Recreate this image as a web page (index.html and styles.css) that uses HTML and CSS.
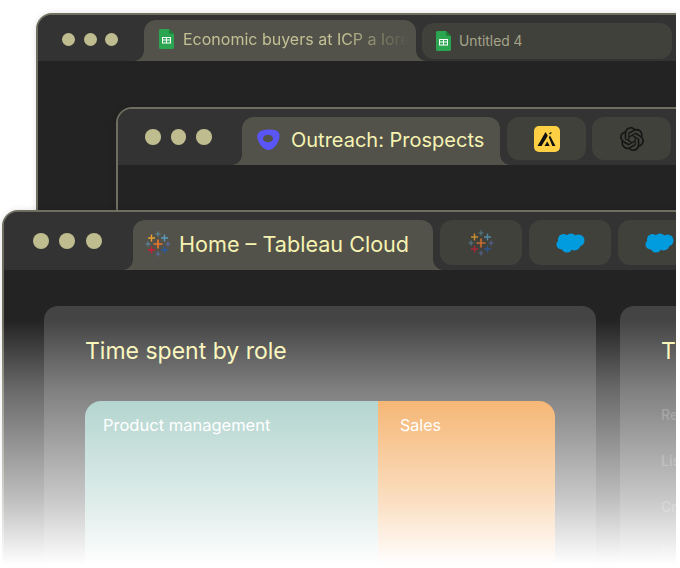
FILE: index.html
```html
<!DOCTYPE html>
<html lang="en">
<head>
    <meta charset="UTF-8">
    <meta name="viewport" content="width=device-width, initial-scale=1.0">
    <title>Browser windows</title>
    <link rel="stylesheet" href="styles.css">
</head>
<body>

<svg class="icon-defs">
    <symbol id="sheets" viewBox="0 0 15 20">
        <path d="M1.5 0H10l5 5v13.5a1.5 1.5 0 0 1-1.5 1.5h-12A1.5 1.5 0 0 1 0 18.5v-17A1.5 1.5 0 0 1 1.5 0z" fill="#2ca550"/>
        <path d="M10 0l5 5h-3.6A1.4 1.4 0 0 1 10 3.6z" fill="#1c8038"/>
        <path d="M3 8h9v6.500H3zM4 9v1.600h3V9zm4 0v1.600h3V9zM4 11.600V13.500h3v-1.900zm4 0V13.500h3v-1.900z" fill="#fff" fill-rule="evenodd"/>
    </symbol>
    <symbol id="tableau" viewBox="0 0 26 26">
        <path d="M13 8.500v9M8.500 13h9" stroke="#e8762b" stroke-width="1.700"/>
        <path d="M6.500 3.500v7M3 7h7" stroke="#e9a02f" stroke-width="1.400"/>
        <path d="M19.500 3.500v7M16 7h7" stroke="#5b9bbd" stroke-width="1.400"/>
        <path d="M6.500 15.500v7M3 19h7" stroke="#c72037" stroke-width="1.400"/>
        <path d="M19.500 15.500v7M16 19h7" stroke="#2b5a9e" stroke-width="1.400"/>
        <path d="M13 0.500v5M10.500 3h5" stroke="#5b879b" stroke-width="1.200"/>
        <path d="M3 10.500v5M0.500 13h5" stroke="#5b879b" stroke-width="1.200"/>
        <path d="M23 10.500v5M20.500 13h5" stroke="#5a6a9e" stroke-width="1.200"/>
        <path d="M13 20.500v5M10.500 23h5" stroke="#5a6a9e" stroke-width="1.200"/>
    </symbol>
    <symbol id="cloud" viewBox="0 0 29 20">
        <g fill="#019cde">
            <circle cx="7.500" cy="6.500" r="5.500"/>
            <circle cx="15" cy="6" r="5.500"/>
            <circle cx="22.500" cy="7.500" r="6"/>
            <circle cx="5.500" cy="11.500" r="5"/>
            <circle cx="11" cy="14" r="5.500"/>
            <circle cx="18.500" cy="11.500" r="6"/>
        </g>
    </symbol>
</svg>

<div class="stage">

    <section class="window window-back">
        <div class="titlebar">
            <div class="dots"><span></span><span></span><span></span></div>
            <div class="tab tab-active">
                <svg class="tab-icon sheet-icon"><use href="#sheets"/></svg>
                <span class="tab-label tab-label-faded">Economic buyers at ICP a lore</span>
            </div>
            <div class="tab tab-wide">
                <svg class="tab-icon sheet-icon"><use href="#sheets"/></svg>
                <span class="tab-label">Untitled 4</span>
            </div>
        </div>
    </section>

    <section class="window window-middle">
        <div class="titlebar">
            <div class="dots"><span></span><span></span><span></span></div>
            <div class="tab tab-active">
                <svg class="tab-icon outreach-icon" viewBox="0 0 23 21">
                    <path fill-rule="evenodd" fill="#5a55f5" d="M4 2C8 0 15 0 19 1.500 22 2.600 23 5 22.500 8 21.500 14 17 21 11.500 21 6 21 .5 13 .2 8 0 5 1.500 3 4 2zM6 9.500a5 3.800 0 1 0 10 0 5 3.800 0 1 0-10 0z"/>
                </svg>
                <span class="tab-label">Outreach: Prospects</span>
            </div>
            <div class="tab tab-icon-only">
                <svg class="tab-icon brand-icon" viewBox="0 0 26 26">
                    <rect width="26" height="26" rx="5" fill="#ffd044"/>
                    <path d="M3.500 20L11.500 6 13.800 9.800 7.500 20zM14.800 11.300L16 9.500 21.500 20h-3.200zM10.500 20l2.700-4.500 2.600 4.500zM15 7.600l2-1.700.8 1-2 1.700z" fill="#111"/>
                </svg>
            </div>
            <div class="tab tab-icon-only">
                <svg class="tab-icon openai-icon" viewBox="0 0 24 24">
                    <path fill="#141414" d="M22.2819 9.8211a5.9847 5.9847 0 0 0-.5157-4.9108 6.0462 6.0462 0 0 0-6.5098-2.9A6.0651 6.0651 0 0 0 4.9807 4.1818a5.9847 5.9847 0 0 0-3.9977 2.9 6.0462 6.0462 0 0 0 .7427 7.0966 5.98 5.98 0 0 0 .511 4.9107 6.051 6.051 0 0 0 6.5146 2.9001A5.9847 5.9847 0 0 0 13.2599 24a6.0557 6.0557 0 0 0 5.7718-4.2058 5.9894 5.9894 0 0 0 3.9977-2.9001 6.0557 6.0557 0 0 0-.7475-7.0729zm-9.022 12.6081a4.4755 4.4755 0 0 1-2.8764-1.0408l.1419-.0804 4.7783-2.7582a.7948.7948 0 0 0 .3927-.6813v-6.7369l2.02 1.1686a.071.071 0 0 1 .038.052v5.5826a4.504 4.504 0 0 1-4.4945 4.4944zm-9.6607-4.1254a4.4708 4.4708 0 0 1-.5346-3.0137l.142.0852 4.783 2.7582a.7712.7712 0 0 0 .7806 0l5.8428-3.3685v2.3324a.0804.0804 0 0 1-.0332.0615L9.74 19.9502a4.4992 4.4992 0 0 1-6.1408-1.6464zM2.3408 7.8956a4.485 4.485 0 0 1 2.3655-1.9728V11.6a.7664.7664 0 0 0 .3879.6765l5.8144 3.3543-2.0201 1.1685a.0757.0757 0 0 1-.071 0l-4.8303-2.7865A4.504 4.504 0 0 1 2.3408 7.872zm16.5963 3.8558L13.1038 8.364 15.1192 7.2a.0757.0757 0 0 1 .071 0l4.8303 2.7913a4.4944 4.4944 0 0 1-.6765 8.1042v-5.6772a.79.79 0 0 0-.407-.667zm2.0107-3.0231l-.142-.0852-4.7735-2.7818a.7759.7759 0 0 0-.7854 0L9.409 9.2297V6.8974a.0662.0662 0 0 1 .0284-.0615l4.8303-2.7866a4.4992 4.4992 0 0 1 6.6802 4.66zM8.3065 12.863l-2.02-1.1638a.0804.0804 0 0 1-.038-.0567V6.0742a4.4992 4.4992 0 0 1 7.3757-3.4537l-.142.0805L8.704 5.459a.7948.7948 0 0 0-.3927.6813zm1.0976-2.3654l2.602-1.4998 2.6069 1.4998v2.9994l-2.5974 1.4997-2.6067-1.4997Z"/>
                </svg>
            </div>
        </div>
    </section>

    <section class="window window-front">
        <div class="titlebar">
            <div class="dots"><span></span><span></span><span></span></div>
            <div class="tab tab-active">
                <svg class="tab-icon tableau-icon"><use href="#tableau"/></svg>
                <span class="tab-label">Home – Tableau Cloud</span>
            </div>
            <div class="tab tab-icon-only">
                <svg class="tab-icon tableau-icon tableau-dim"><use href="#tableau"/></svg>
            </div>
            <div class="tab tab-icon-only">
                <svg class="tab-icon cloud-icon"><use href="#cloud"/></svg>
            </div>
            <div class="tab tab-icon-only">
                <svg class="tab-icon cloud-icon"><use href="#cloud"/></svg>
            </div>
        </div>
        <div class="content">
            <div class="card">
                <h2 class="card-title">Time spent by role</h2>
                <div class="chart">
                    <div class="segment segment-product">Product management</div>
                    <div class="segment segment-sales">Sales</div>
                </div>
            </div>
            <div class="card">
                <h2 class="card-title">T</h2>
                <ul class="rows">
                    <li>Re</li>
                    <li>Lis</li>
                    <li>Cr</li>
                    <li>C</li>
                </ul>
            </div>
        </div>
    </section>

    <div class="fade"></div>
</div>

</body>
</html>
```

FILE: styles.css
```css
body {
    margin: 0;
    background-color: #fff;
    font-family: "Inter", "Liberation Sans", sans-serif;
    overflow: hidden;
}
.icon-defs {
    display: none;
}
.stage {
    position: relative;
    width: 676px;
    height: 568px;
    overflow: hidden;
}

/* windows sit on a free canvas, each one overlapping the last */
.window {
    position: absolute;
    width: 900px;
    height: 700px;
    box-sizing: border-box;
    border: 2px solid #6f6e60;
    border-radius: 16px;
    background-color: #232323;
    box-shadow: 0 0 6px rgba(0, 0, 0, 0.12);
    overflow: hidden;
}
.window-back {
    left: 36px;
    top: 13px;
}
.window-middle {
    left: 116px;
    top: 107px;
}
.window-front {
    left: 2px;
    top: 210px;
}

.titlebar {
    display: flex;
    align-items: flex-end;
    background-color: #333;
}
.window-back .titlebar {
    height: 46px;
}
.window-middle .titlebar {
    height: 56px;
}
.window-front .titlebar {
    height: 58px;
}

.dots {
    display: flex;
    align-self: center;
    flex: none;
}
.dots span {
    border-radius: 50%;
    background-color: #bfbd8f;
}
.window-back .dots {
    gap: 8.500px;
    width: 106px;
    padding-left: 24px;
    box-sizing: border-box;
    margin-top: 3px;
}
.window-back .dots span {
    width: 13px;
    height: 13px;
}
.window-middle .dots {
    gap: 10px;
    width: 124px;
    padding-left: 27px;
    box-sizing: border-box;
}
.window-middle .dots span {
    width: 15.500px;
    height: 15.500px;
}
.window-front .dots {
    gap: 10.400px;
    width: 129px;
    padding-left: 29px;
    box-sizing: border-box;
}
.window-front .dots span {
    width: 16px;
    height: 16px;
}

.tab {
    display: flex;
    align-items: center;
    flex: none;
    box-sizing: border-box;
    border-radius: 12px;
    background-color: #41413c;
}
.tab-active {
    position: relative;
    background-color: #52524a;
    border-radius: 12px 12px 0 0;
}
.tab-active::before,
.tab-active::after {
    content: "";
    position: absolute;
    bottom: 0;
    width: 10px;
    height: 10px;
}
.tab-active::before {
    left: -10px;
    background: radial-gradient(circle at 0 0, transparent 9.500px, #52524a 10px);
}
.tab-active::after {
    right: -10px;
    background: radial-gradient(circle at 100% 0, transparent 9.500px, #52524a 10px);
}
.tab-label {
    white-space: nowrap;
    overflow: hidden;
    color: #f6f3b2;
}
.tab-icon {
    flex: none;
    display: block;
}

/* back window tabs */
.window-back .tab-active {
    width: 272px;
    height: 41px;
    padding: 0 0 4px 15px;
    gap: 9px;
}
.window-back .tab-label {
    font-size: 16px;
    color: #c2c094;
}
.tab-label-faded {
    width: 226px;
    -webkit-mask-image: linear-gradient(to right, #000 70%, transparent 100%);
    mask-image: linear-gradient(to right, #000 70%, transparent 100%);
}
.sheet-icon {
    width: 15px;
    height: 20px;
}
.tab-wide {
    width: 250px;
    height: 36px;
    margin: 0 0 2px 6px;
    padding-left: 14px;
    gap: 8px;
}
.window-back .tab-wide .tab-label {
    font-size: 13.800px;
    color: #a6a58a;
}

/* middle window tabs */
.window-middle .tab-active {
    width: 258px;
    height: 48px;
    padding: 0 0 3px 15px;
    gap: 11px;
}
.window-middle .tab-label {
    font-size: 20px;
}
.outreach-icon {
    width: 23px;
    height: 21px;
}
.tab-icon-only {
    justify-content: center;
}
.window-middle .tab-icon-only {
    width: 79px;
    height: 43px;
    margin: 0 0 5px 6px;
}
.window-middle .tab-active + .tab-icon-only {
    margin-left: 7px;
}
.brand-icon {
    width: 26px;
    height: 26px;
}
.openai-icon {
    width: 24px;
    height: 24px;
}

/* front window tabs */
.window-front .tab-active {
    width: 300px;
    height: 50px;
    padding: 0 0 2px 12px;
    gap: 8px;
}
.window-front .tab-label {
    font-size: 21.600px;
}
.tableau-icon {
    width: 26px;
    height: 26px;
}
.tableau-dim {
    opacity: 0.8;
}
.cloud-icon {
    width: 29px;
    height: 20px;
}
.window-front .tab-icon-only {
    width: 82px;
    height: 45px;
    margin: 0 0 5px 7px;
}

/* dashboard */
.content {
    display: flex;
    gap: 24px;
    padding: 36px 0 0 40px;
}
.card {
    flex: none;
    box-sizing: border-box;
    width: 552px;
    height: 400px;
    padding: 30px 41px 0;
    border-radius: 14px;
    background-color: #444;
}
.card-title {
    margin: 0;
    font-size: 23px;
    font-weight: 400;
    line-height: 30px;
    color: #f9f5b4;
}
.chart {
    display: flex;
    height: 260px;
    margin-top: 35px;
    border-radius: 16px 16px 0 0;
    overflow: hidden;
}
.segment {
    box-sizing: border-box;
    padding: 14px 18px;
    font-size: 16px;
    line-height: 20px;
    color: #fff;
}
.segment-product {
    width: 293px;
    font-size: 16.500px;
    background-color: #8bbeb5;
}
.segment-sales {
    flex: 1;
    padding-left: 22px;
    background-color: #f08e28;
}
.rows {
    list-style: none;
    margin: 26px 0 0;
    padding: 0;
    font-size: 14px;
    font-weight: 500;
    color: #6a6a6a;
}
.rows li {
    height: 46px;
    line-height: 46px;
}

.fade {
    position: absolute;
    inset: 0;
    background: linear-gradient(to bottom, rgba(255, 255, 255, 0) 320px, rgba(255, 255, 255, 0.32) 390px, rgba(255, 255, 255, 0.71) 500px, #fff 565px);
}
```
